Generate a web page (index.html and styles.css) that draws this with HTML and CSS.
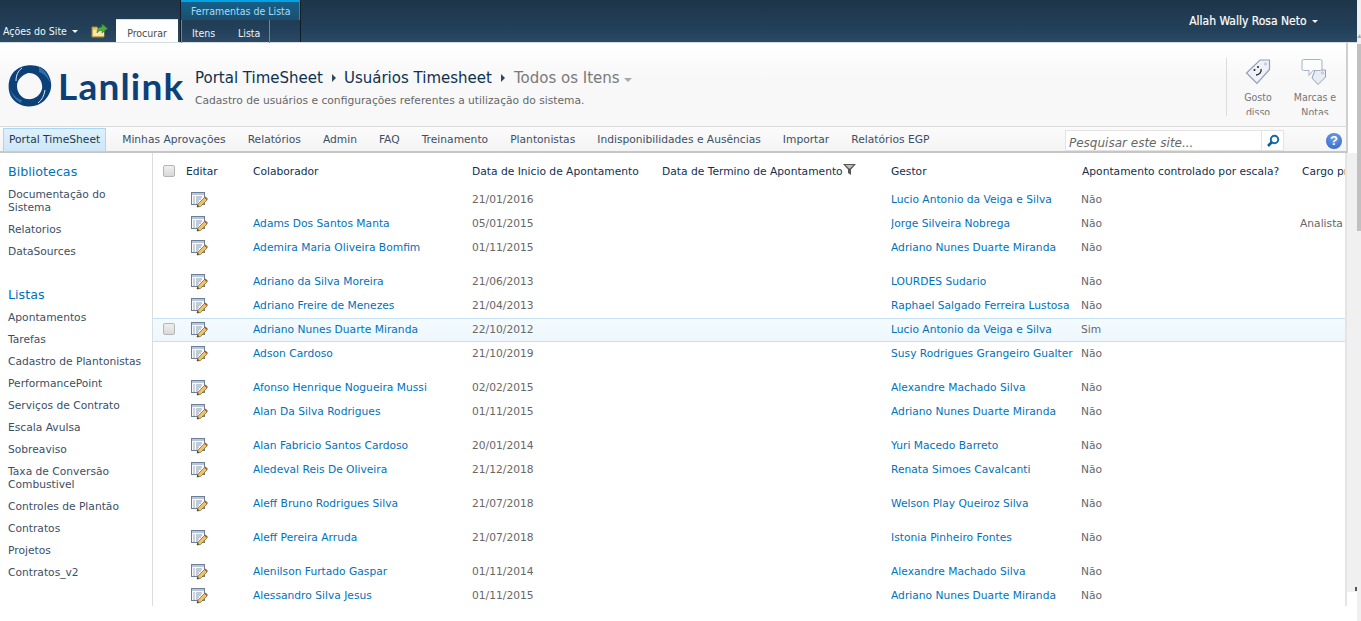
FILE: index.html
```html
<!DOCTYPE html>
<html lang="pt-BR">
<head>
<meta charset="utf-8">
<title>Usuários Timesheet - Todos os Itens</title>
<link rel="stylesheet" href="styles.css">
</head>
<body>
<svg class="defs" width="0" height="0" aria-hidden="true">
  <defs>
    <symbol id="edit" viewBox="0 0 17 17">
      <rect x="0.5" y="1.5" width="13" height="12" fill="#f7f9fc" stroke="#6d7f97"/>
      <rect x="1" y="2" width="12" height="2" fill="#b9c6d8"/>
      <path d="M2.500 6h1M2.500 8h1M2.500 10h1M2.500 12h1" stroke="#44628a"/>
      <path d="M5 6h6M5 8h5M5 10h3M5 12h2" stroke="#8a9ab0"/>
      <path d="M6 16l1-3 6.500-6.500 2.500 2.500-6.500 6.500z" fill="#e9c46a" stroke="#7a6128" stroke-width="0.7"/>
      <path d="M13.500 6.500l2.500 2.500 1-1-2.500-2.500z" fill="#b5533f"/>
      <path d="M6 16l.6-2.200 1.700 1.600z" fill="#3a3a3a"/>
    </symbol>
  </defs>
</svg>
<div class="page">
  <div class="app">
    <header class="ribbon">
      <div class="site-actions">Ações do Site <span class="caret"></span></div>
      <svg class="folder" width="17" height="15" viewBox="0 0 17 15"><path d="M1 4h5l1 1.500h6v8.500H1z" fill="#e6c766" stroke="#a58a3f"/><path d="M2 7h11v6H2z" fill="#f7e6a8"/><path d="M6 10c0-4 2-6 5-6V1l5.500 4.500L11 10V7.500c-2 0-4 .5-5 2.500z" fill="#4faa3c" stroke="#2f7d25" stroke-width="0.6"/></svg>
      <div class="tab-browse">Procurar</div>
      <div class="tool-group">
        <div class="tool-title">Ferramentas de Lista</div>
        <div class="tool-tabs">
          <div class="tool-inner"><span class="tool-itens">Itens</span><span class="tool-lista">Lista</span></div>
        </div>
      </div>
      <div class="user">Allah Wally Rosa Neto <span class="caret"></span></div>
    </header>
    <section class="title-area">
      <div class="logo">
        <svg width="44" height="42" viewBox="0 0 44 42"><path fill-rule="evenodd" d="M19 0.500C28 -0.500 36 2 40 9c4 7 4.500 15 0 22-4 6.500-11 10.500-19 10.500C12 41.500 4 36 1.500 28-1 19 2 9 8 5c3-2.500 7-4 11-4.500zM20 8c-6 2-11 7-11 13 0 6 4 12 10 13 7 1 13-3 15-10 1-6-2-12-8-15-2-1-4-1-6-1z" fill="#0b4079"/><path d="M31 2c6 3 10 9 11 16-2-5-6-9-11-11z M13 38c-6-3-10-9-11-15 2 6 6 10 12 12z" fill="#2f6ea8"/><path d="M14 3C10 6 8 10 8 16M30 38c4-3 6-7 7-13" fill="none" stroke="#dfe8f1" stroke-width="1"/></svg>
        <span class="logo-text">Lanlink</span>
      </div>
      <div class="titles">
        <div class="crumbs">
          <span>Portal TimeSheet</span><span class="sep"></span><span>Usuários Timesheet</span><span class="sep"></span><span class="current">Todos os Itens</span><span class="cur-caret"></span>
        </div>
        <div class="subtitle">Cadastro de usuários e configurações referentes a utilização do sistema.</div>
      </div>
      <div class="social">
        <div class="social-btn">
          <svg width="28" height="28" viewBox="0 0 28 28"><path d="M16 2h9.500v9.500L13 25.500 2.500 15z" fill="#eef1f7" stroke="#8f9fbb" stroke-width="1.200"/><circle cx="21.500" cy="6" r="1" fill="#fff" stroke="#8896ae" stroke-width="0.600"/><circle cx="10.500" cy="12" r="1" fill="#222"/><circle cx="14" cy="9" r="1" fill="#222"/><path d="M17 11c1 3-2 6-5 6" fill="none" stroke="#222" stroke-width="1.300"/></svg>
          <div class="social-label">Gosto disso</div>
        </div>
        <div class="social-btn social-wide">
          <svg width="28" height="28" viewBox="0 0 28 28"><path d="M14 12h10.500v7L17 26.500 11 20z" fill="#e8ecf3" stroke="#8f9fbb"/><circle cx="21.500" cy="15" r="1" fill="#fff" stroke="#8896ae" stroke-width="0.600"/><path d="M2.500 1.500h17a1.500 1.500 0 0 1 1.500 1.500v8a1.500 1.500 0 0 1-1.500 1.500H12l-4 5v-5H2.500A1.500 1.500 0 0 1 1 11V3a1.500 1.500 0 0 1 1.500-1.500z" fill="#fbfcfe" stroke="#a6b2c6"/></svg>
          <div class="social-label">Marcas e Notas</div>
        </div>
      </div>
    </section>
    <nav class="topnav">
      <a class="nav-item nav-selected">Portal TimeSheet</a>
      <a class="nav-item">Minhas Aprovações</a>
      <a class="nav-item">Relatórios</a>
      <a class="nav-item">Admin</a>
      <a class="nav-item">FAQ</a>
      <a class="nav-item">Treinamento</a>
      <a class="nav-item">Plantonistas</a>
      <a class="nav-item">Indisponibilidades e Ausências</a>
      <a class="nav-item">Importar</a>
      <a class="nav-item">Relatórios EGP</a>
      <div class="search">
        <span class="search-text">Pesquisar este site...</span>
        <span class="search-btn"><svg width="14" height="14" viewBox="0 0 14 14"><circle cx="8.500" cy="5.500" r="3.700" fill="none" stroke="#0f6cb0" stroke-width="2"/><path d="M6 8l-4 4" stroke="#0f5c9c" stroke-width="2.600"/></svg></span>
      </div>
      <div class="help">?</div>
    </nav>
    <div class="body-row">
      <aside class="sidebar">
        <h3 class="side-head">Bibliotecas</h3>
        <a class="side-item">Documentação do Sistema</a>
        <a class="side-item">Relatorios</a>
        <a class="side-item">DataSources</a>
        <h3 class="side-head side-head-2">Listas</h3>
        <a class="side-item">Apontamentos</a>
        <a class="side-item">Tarefas</a>
        <a class="side-item">Cadastro de Plantonistas</a>
        <a class="side-item">PerformancePoint</a>
        <a class="side-item">Serviços de Contrato</a>
        <a class="side-item">Escala Avulsa</a>
        <a class="side-item">Sobreaviso</a>
        <a class="side-item">Taxa de Conversão Combustivel</a>
        <a class="side-item">Controles de Plantão</a>
        <a class="side-item">Contratos</a>
        <a class="side-item">Projetos</a>
        <a class="side-item">Contratos_v2</a>
      </aside>
      <main class="list">
        <table class="grid">
          <colgroup>
            <col class="c-check"><col class="c-edit"><col class="c-name"><col class="c-start"><col class="c-end"><col class="c-boss"><col class="c-scale"><col class="c-role">
          </colgroup>
          <thead>
            <tr>
              <th><span class="check"></span></th>
              <th>Editar</th>
              <th>Colaborador</th>
              <th class="th-start">Data de Inicio de Apontamento</th>
              <th>Data de Termino de Apontamento<svg class="filter" width="13" height="11" viewBox="0 0 13 11"><path d="M0 0h13L8 5.500V11L5 9V5.500z" fill="#555"/><path d="M2.500 1h8L7 4.500H6z" fill="#bdbdbd"/></svg></th>
              <th>Gestor</th>
              <th>Apontamento controlado por escala?</th>
              <th>Cargo principal</th>
            </tr>
          </thead>
          <tbody>
            <tr><td></td><td><svg class="edit"><use href="#edit"/></svg></td><td></td><td>21/01/2016</td><td></td><td><a>Lucio Antonio da Veiga e Silva</a></td><td>Não</td><td></td></tr>
            <tr><td></td><td><svg class="edit"><use href="#edit"/></svg></td><td><a>Adams Dos Santos Manta</a></td><td>05/01/2015</td><td></td><td><a>Jorge Silveira Nobrega</a></td><td>Não</td><td>Analista</td></tr>
            <tr class="tall"><td></td><td><svg class="edit"><use href="#edit"/></svg></td><td><a>Ademira Maria Oliveira Bomfim</a></td><td>01/11/2015</td><td></td><td><a>Adriano Nunes Duarte Miranda</a></td><td>Não</td><td></td></tr>
            <tr><td></td><td><svg class="edit"><use href="#edit"/></svg></td><td><a>Adriano da Silva Moreira</a></td><td>21/06/2013</td><td></td><td><a>LOURDES Sudario</a></td><td>Não</td><td></td></tr>
            <tr><td></td><td><svg class="edit"><use href="#edit"/></svg></td><td><a>Adriano Freire de Menezes</a></td><td>21/04/2013</td><td></td><td><a>Raphael Salgado Ferreira Lustosa</a></td><td>Não</td><td></td></tr>
            <tr class="hover"><td><span class="check"></span></td><td><svg class="edit"><use href="#edit"/></svg></td><td><a>Adriano Nunes Duarte Miranda</a></td><td>22/10/2012</td><td></td><td><a>Lucio Antonio da Veiga e Silva</a></td><td>Sim</td><td></td></tr>
            <tr class="tall"><td></td><td><svg class="edit"><use href="#edit"/></svg></td><td><a>Adson Cardoso</a></td><td>21/10/2019</td><td></td><td><a>Susy Rodrigues Grangeiro Gualter</a></td><td>Não</td><td></td></tr>
            <tr><td></td><td><svg class="edit"><use href="#edit"/></svg></td><td><a>Afonso Henrique Nogueira Mussi</a></td><td>02/02/2015</td><td></td><td><a>Alexandre Machado Silva</a></td><td>Não</td><td></td></tr>
            <tr class="tall"><td></td><td><svg class="edit"><use href="#edit"/></svg></td><td><a>Alan Da Silva Rodrigues</a></td><td>01/11/2015</td><td></td><td><a>Adriano Nunes Duarte Miranda</a></td><td>Não</td><td></td></tr>
            <tr><td></td><td><svg class="edit"><use href="#edit"/></svg></td><td><a>Alan Fabricio Santos Cardoso</a></td><td>20/01/2014</td><td></td><td><a>Yuri Macedo Barreto</a></td><td>Não</td><td></td></tr>
            <tr class="tall"><td></td><td><svg class="edit"><use href="#edit"/></svg></td><td><a>Aledeval Reis De Oliveira</a></td><td>21/12/2018</td><td></td><td><a>Renata Simoes Cavalcanti</a></td><td>Não</td><td></td></tr>
            <tr class="tall"><td></td><td><svg class="edit"><use href="#edit"/></svg></td><td><a>Aleff Bruno Rodrigues Silva</a></td><td>21/07/2018</td><td></td><td><a>Welson Play Queiroz Silva</a></td><td>Não</td><td></td></tr>
            <tr class="tall"><td></td><td><svg class="edit"><use href="#edit"/></svg></td><td><a>Aleff Pereira Arruda</a></td><td>21/07/2018</td><td></td><td><a>Istonia Pinheiro Fontes</a></td><td>Não</td><td></td></tr>
            <tr><td></td><td><svg class="edit"><use href="#edit"/></svg></td><td><a>Alenilson Furtado Gaspar</a></td><td>01/11/2014</td><td></td><td><a>Alexandre Machado Silva</a></td><td>Não</td><td></td></tr>
            <tr><td></td><td><svg class="edit"><use href="#edit"/></svg></td><td><a>Alessandro Silva Jesus</a></td><td>01/11/2015</td><td></td><td><a>Adriano Nunes Duarte Miranda</a></td><td>Não</td><td></td></tr>
          </tbody>
        </table>
      </main>
      <div class="inner-track"><span class="arrow-down"></span></div>
    </div>
  </div>
  <div class="outer-scroll"><span class="arrow-up"></span><div class="thumb"></div></div>
</div>
</body>
</html>
```
FILE: styles.css
```css
* { box-sizing: border-box; }
html, body { margin: 0; height: 621px; overflow: hidden; background: #fff; }
body { font-family: "DejaVu Sans", Verdana, sans-serif; font-size: 10.700px; color: #676767; }
.defs { display: block; height: 0; }
.page { display: flex; height: 621px; }
.app { width: 1357px; display: flex; flex-direction: column; }
.outer-scroll { width: 4px; background: #f0f0f0; padding-top: 34px; }
.arrow-up { display: block; width: 0; height: 0; margin: 0 0 6px 0; border-left: 3px solid transparent; border-right: 1px solid transparent; border-bottom: 4px solid #a6a6a6; }
.thumb { height: 187px; background: #c0c0c0; }

/* ribbon */
.ribbon { height: 43px; flex: none; display: flex; align-items: flex-end; background: linear-gradient(#1e3549, #23405a 70%, #2c4a63); border-bottom: 1px solid #d4dbe2; font-family: "DejaVu Sans Condensed", "Liberation Sans", Tahoma, sans-serif; font-size: 10.500px; color: #fff; }
.site-actions { width: 91px; padding-left: 3px; height: 24px; line-height: 26px; white-space: nowrap; color: #f2f5f8; }
.caret { display: inline-block; width: 0; height: 0; margin-left: 2px; vertical-align: 2px; border-left: 3px solid transparent; border-right: 3px solid transparent; border-top: 3px solid #f2f5f8; }
.folder { margin-bottom: 4px; }
.tab-browse { margin-left: 8px; width: 62px; height: 23px; background: #fff; border-top: 1px solid #d9dee3; text-align: center; line-height: 27px; color: #4c4c4c; }
.tool-group { margin-left: 2px; width: 121px; height: 42px; display: flex; flex-direction: column; border-left: 1px solid #0f1d29; border-right: 1px solid #0f1d29; }
.tool-title { height: 20px; background: linear-gradient(#145f88, #1c4f72); border-top: 2px solid #00a3e4; border-right: 1px solid #1a8fc8; padding-left: 10px; line-height: 19px; color: #a9daf3; white-space: nowrap; }
.tool-tabs { flex: 1; }
.tool-inner { width: 89px; height: 100%; border-left: 1px solid #27a0da; border-right: 1px solid #27a0da; padding-left: 10px; line-height: 26px; display: flex; color: #eef3f7; }
.tool-itens { width: 46px; }
.user { margin-left: auto; padding-right: 39px; height: 42px; line-height: 42px; font-size: 12px; -webkit-text-stroke: 0.200px #fff; }

/* title */
.title-area { height: 84px; flex: none; display: flex; background: linear-gradient(#fff, #f8f8f8 40%, #f8f8f8); border-bottom: 1px solid #d9d9d9; border-right: 2px solid #cfcfcf; margin-right: 9px; }
.logo { width: 195px; display: flex; align-items: center; padding: 3px 0 0 8px; color: #0b4079; }
.logo svg { flex: none; }
.logo-text { margin-left: 6px; font-family: Lato, sans-serif; font-weight: 700; font-size: 37px; line-height: 40px; letter-spacing: 1.200px; }
.titles { padding-top: 24px; flex: 1; }
.crumbs { display: flex; align-items: center; height: 22px; font-size: 15px; color: #0f3150; white-space: nowrap; }
.sep { width: 0; height: 0; margin: 0 8px 0 9px; border-left: 4px solid #33475b; border-top: 4px solid transparent; border-bottom: 4px solid transparent; }
.sep + span + .sep { margin-right: 9px; }
.current { color: #7a7a7a; }
.cur-caret { width: 0; height: 0; margin-left: 4px; margin-top: 3px; border-left: 4px solid transparent; border-right: 4px solid transparent; border-top: 4px solid #a8a8a8; }
.subtitle { margin-top: 5px; color: #676767; }
.social { display: flex; margin: 15px 0 10px; width: 120px; border-left: 1px solid #dcdcdc; font-family: "DejaVu Sans Condensed", "Liberation Sans", Tahoma, sans-serif; font-size: 10.500px; }
.social-btn { width: 62px; height: 57px; text-align: center; overflow: hidden; color: #777; padding: 0 14px; }
.social-wide { width: 46px; margin-left: 3px; padding: 0; }
.social-btn svg { display: block; margin: 0 auto; }
.social-label { margin-top: 4px; line-height: 15px; }

/* nav */
.topnav { height: 26px; flex: none; display: flex; align-items: stretch; gap: 10px; background: linear-gradient(#fbfbfb, #f4f4f4); border-bottom: 2px solid #c6c6c6; border-right: 2px solid #cfcfcf; margin-right: 9px; padding: 0 0 0 3px; }
.nav-item { padding: 0 6px; line-height: 26px; color: #3b4f65; white-space: nowrap; }
.nav-selected { padding: 0 5px; margin: 1px 0 0; background: linear-gradient(#dff0fb, #cde7f8); border: 1px solid #a9d6f3; line-height: 22px; height: 24px; color: #23384c; }
.search { margin-left: auto; width: 219px; height: 21px; margin-top: 3px; background: #fff; border: 1px solid #e3e3e3; display: flex; justify-content: space-between; font-style: italic; font-size: 12px; line-height: 24px; color: #676767; padding-left: 3px; }
.search-btn { width: 22px; border-left: 1px solid #e3e3e3; display: flex; align-items: center; justify-content: center; }
.help { width: 16px; height: 16px; margin: 6px 4px 0 32px; border-radius: 50%; background: radial-gradient(circle at 50% 30%, #6f9fe6, #2c62c6); color: #fff; font: bold 13px/16px "Liberation Sans", sans-serif; text-align: center; }

/* body */
.body-row { height: 453px; flex: none; display: flex; }
.sidebar { width: 153px; flex: none; border-right: 1px solid #dbddde; padding: 10px 0 0 8px; overflow: hidden; }
.side-head { margin: 0 0 8px; font-size: 12.700px; font-weight: normal; line-height: 17px; color: #0072bc; }
.side-head-2 { margin-top: 19px; margin-bottom: 8px; }
.side-item { display: block; padding: 0 6px 9px 0; line-height: 13px; color: #3b4f65; }
.list { width: 1194px; flex: none; overflow: hidden; border-right: 2px solid #e4e4e4; }
.inner-track { flex: 1; height: 439px; background: #f0f0f0; padding: 437px 0 0 8px; }
.arrow-down { display: block; width: 4px; height: 4px; margin-top: -3px; background: #555; }

/* table */
.grid { table-layout: fixed; width: 1260px; border-collapse: collapse; }
.c-check { width: 33px; } .c-edit { width: 67px; } .c-name { width: 219px; } .c-start { width: 190px; }
.c-end { width: 229px; } .c-boss { width: 190px; } .c-scale { width: 219px; } .c-role { width: 113px; }
.grid th { height: 35px; padding: 1px 0 0; text-align: left; font-weight: normal; color: #0f3150; white-space: nowrap; vertical-align: middle; }
.grid th:nth-child(7) { padding-left: 1px; }
.grid th:nth-child(8) { padding-left: 2px; }
.grid td { height: 24px; padding: 5px 0 0; vertical-align: top; line-height: 13px; white-space: nowrap; overflow: hidden; }
.grid td:first-child, .grid th:first-child { padding-left: 10px; }
.grid tr.tall td { height: 34px; }
.grid tr.hover td { background: linear-gradient(#f4fbff, #edf7fd); box-shadow: inset 0 1px 0 #c5e2f5, inset 0 -1px 0 #c5e2f5; }
.grid a { color: #0072bc; }
.grid td:nth-child(2) { padding-left: 5px; padding-top: 3px; }
.edit { display: block; width: 17px; height: 17px; }
.check { display: block; width: 12px; height: 12px; border: 1px solid #b5b5b5; border-radius: 2px; background: linear-gradient(#efefef, #d9d9d9); }
```
